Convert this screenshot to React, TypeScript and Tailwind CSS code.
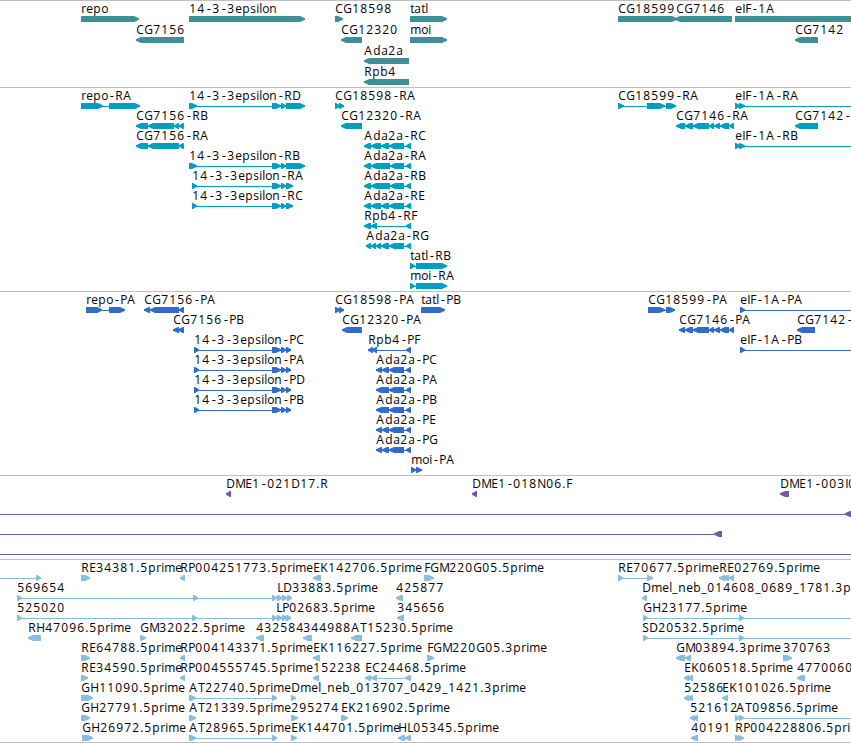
type Feature = {
  label?: string;
  at: number; // label origin
  row: number;
  dir: 1 | -1;
  blocks: [number, number][];
  line?: [number, number];
};

type TrackData = {
  name: string;
  fill: string;
  stroke: string;
  height: string;
  pitch: number;
  features: Feature[];
};

const WIDTH = 851;
const OFF = 860; // past the right edge

const ADVANCE: Record<string, number> = {
  "-": 7, ".": 4, _: 6,
  A: 9, B: 7, C: 8, D: 9, E: 7, F: 6, G: 9, H: 9, I: 3, K: 8, L: 6, M: 10,
  N: 9, P: 7, R: 8, S: 7, T: 7,
  a: 7, b: 8, d: 8, e: 7, i: 3, l: 3, m: 11, n: 8, o: 7, p: 8, r: 5, s: 6, t: 4,
};

// "81-103 109-140" -> [[81, 103], [109, 140]]
function parse(spec: string): [number, number][] {
  if (!spec) return [];
  return spec.split(" ").map((s) => {
    const [a, b] = s.split("-").map(Number);
    return [a, b];
  });
}

function f(
  row: number,
  label: string,
  dir: 1 | -1,
  spec: string,
  opts: { at?: number; line?: [number, number] } = {}
): Feature {
  const blocks = parse(spec);
  const at = opts.at ?? blocks[0]?.[0] ?? 0;
  const line: [number, number] | undefined =
    opts.line ??
    (blocks.length > 1 ? [blocks[0][0], blocks[blocks.length - 1][1]] : undefined);
  return { label, at, row, dir, blocks, line };
}

const GENES: Feature[] = [
  f(0, "repo", 1, "81-139"),
  f(0, "14-3-3epsilon", 1, "189-305"),
  f(0, "CG18598", 1, "335-343"),
  f(0, "tatl", 1, "410-447"),
  f(0, "CG18599", 1, "618-677"),
  f(0, "CG7146", -1, "675-732", { at: 676 }),
  f(0, "eIF-1A", 1, "735-860"),
  f(1, "CG7156", -1, "136-184"),
  f(1, "CG12320", -1, "341-362"),
  f(1, "moi", 1, "410-447"),
  f(1, "CG7142", -1, "795-818"),
  f(2, "Ada2a", -1, "364-409"),
  f(3, "Rpb4", -1, "364-409"),
];

const ADA_LONG = "364-371 371-381 381-389 389-404 406-411";
const ADA_SHORT = "364-371 371-390 390-404 406-411";

const TRANSCRIPTS: Feature[] = [
  f(0, "repo-RA", 1, "81-103 109-140"),
  f(0, "14-3-3epsilon-RD", 1, "189-197 272-281 281-286 286-305"),
  f(0, "CG18598-RA", 1, "335-340 339-344"),
  f(0, "CG18599-RA", 1, "618-624 647-665 666-676"),
  f(0, "eIF-1A-RA", 1, "735-740 739-745", { line: [735, OFF] }),
  f(1, "CG7156-RB", -1, "136-148 148-174 174-179 179-184"),
  f(1, "CG12320-RA", -1, "341-362"),
  f(1, "CG7146-RA", -1, "676-685 685-693 693-709 709-714 714-720 720-729 729-734"),
  f(1, "CG7142-RA", -1, "795-818"),
  f(2, "CG7156-RA", -1, "136-148 148-179 179-184"),
  f(2, "Ada2a-RC", -1, ADA_LONG),
  f(2, "eIF-1A-RB", 1, "735-740 739-745", { line: [735, OFF] }),
  f(3, "14-3-3epsilon-RB", 1, "189-197 272-281 281-286 286-305"),
  f(3, "Ada2a-RA", -1, ADA_SHORT),
  f(4, "14-3-3epsilon-RA", 1, "192-197 272-281 281-286 286-293"),
  f(4, "Ada2a-RB", -1, ADA_SHORT),
  f(5, "14-3-3epsilon-RC", 1, "192-197 272-281 281-286 286-293"),
  f(5, "Ada2a-RE", -1, ADA_LONG),
  f(6, "Rpb4-RF", -1, "364-371 371-377 406-411"),
  f(7, "Ada2a-RG", -1, "366-371 371-376 376-381 381-389 389-404 406-411"),
  f(8, "tatl-RB", 1, "410-415 416-447"),
  f(9, "moi-RA", 1, "410-415 416-447"),
];

const EPSILON_CDS = "194-199 272-281 281-286 286-291";
const ADA_CDS_LONG = "376-382 382-389 389-404 406-411";
const ADA_CDS_SHORT = "376-389 389-404 406-411";

const PROTEINS: Feature[] = [
  f(0, "repo-PA", 1, "86-102 109-125"),
  f(0, "CG7156-PA", -1, "144-150 150-179 179-184"),
  f(0, "CG18598-PA", 1, "335-340 339-344"),
  f(0, "tatl-PB", 1, "421-445"),
  f(0, "CG18599-PA", 1, "648-665 666-675"),
  f(0, "eIF-1A-PA", 1, "740-745", { line: [740, OFF] }),
  f(1, "CG7156-PB", -1, "173-179 178-184"),
  f(1, "CG12320-PA", -1, "342-362"),
  f(1, "CG7146-PA", -1, "679-685 685-693 693-709 709-714 714-720 720-729 729-734"),
  f(1, "CG7142-PA", -1, "797-815"),
  f(2, "14-3-3epsilon-PC", 1, EPSILON_CDS),
  f(2, "Rpb4-PF", -1, "368-373 372-377 406-411"),
  f(2, "eIF-1A-PB", 1, "740-745", { line: [740, OFF] }),
  f(3, "14-3-3epsilon-PA", 1, EPSILON_CDS),
  f(3, "Ada2a-PC", -1, ADA_CDS_LONG),
  f(4, "14-3-3epsilon-PD", 1, EPSILON_CDS),
  f(4, "Ada2a-PA", -1, ADA_CDS_SHORT),
  f(5, "14-3-3epsilon-PB", 1, EPSILON_CDS),
  f(5, "Ada2a-PB", -1, ADA_CDS_SHORT),
  f(6, "Ada2a-PE", -1, ADA_CDS_LONG),
  f(7, "Ada2a-PG", -1, ADA_CDS_LONG),
  f(8, "moi-PA", 1, "411-416 416-422"),
];

const BAC_ENDS: Feature[] = [
  f(0, "DME1-021D17.R", -1, "226-231"),
  f(0, "DME1-018N06.F", -1, "472-477"),
  f(0, "DME1-003I0", -1, "780-789"),
  f(1, "", -1, "845-851", { line: [0, OFF] }),
  f(2, "", -1, "714-722", { line: [0, 722] }),
  f(3, "", -1, "", { line: [0, OFF] }),
];

const ESTS: Feature[] = [
  f(0, "", 1, "36-41", { line: [0, 41] }),
  f(0, "RE34381.5prime", 1, "81-90"),
  f(0, "RP004251773.5prime", -1, "180-185"),
  f(0, "EK142706.5prime", -1, "313-321"),
  f(0, "FGM220G05.5prime", 1, "424-434"),
  f(0, "RE70677.5prime", 1, "618-623 647-653"),
  f(0, "RE02769.5prime", -1, "719-725 722-729 729-734"),
  f(1, "569654", 1, "17-22 193-198 272-277 277-282 282-287 287-292"),
  f(1, "LD33883.5prime", 1, "277-282 282-287 287-292"),
  f(1, "425877", -1, "396-403"),
  f(1, "Dmel_neb_014608_0689_1781.3prime", -1, "642-647"),
  f(2, "525020", 1, "17-22 192-197 272-277 277-282 282-287 286-291"),
  f(2, "LP02683.5prime", 1, "277-282 282-287 286-291", { at: 276 }),
  f(2, "345656", -1, "397-404"),
  f(2, "GH23177.5prime", 1, "643-648 739-744", { line: [643, OFF] }),
  f(3, "RH47096.5prime", -1, "28-41"),
  f(3, "GM32022.5prime", 1, "140-146"),
  f(3, "432584", -1, "256-264"),
  f(3, "344988", -1, "303-312"),
  f(3, "AT15230.5prime", -1, "351-362"),
  f(3, "SD20532.5prime", 1, "643-648 739-744", { at: 642, line: [643, OFF] }),
  f(4, "RE64788.5prime", 1, "81-90"),
  f(4, "RP004143371.5prime", -1, "180-185"),
  f(4, "EK116227.5prime", -1, "313-320"),
  f(4, "FGM220G05.3prime", 1, "427-434"),
  f(4, "GM03894.3prime", -1, "676-685 685-691"),
  f(4, "370763", 1, "783-792"),
  f(5, "RE34590.5prime", 1, "81-88"),
  f(5, "RP004555745.5prime", -1, "180-185"),
  f(5, "152238", -1, "313-319"),
  f(5, "EC24468.5prime", -1, "365-371 371-377 405-411"),
  f(5, "EK060518.5prime", -1, "684-689 687-693"),
  f(5, "4770060", -1, "797-805"),
  f(6, "GH11090.5prime", 1, "81-93"),
  f(6, "AT22740.5prime", 1, "189-196 272-277"),
  f(6, "Dmel_neb_013707_0429_1421.3prime", 1, "291-296"),
  f(6, "52586", -1, "684-689 687-693"),
  f(6, "EK101026.5prime", -1, "722-728"),
  f(7, "GH27791.5prime", 1, "81-90"),
  f(7, "AT21339.5prime", 1, "189-196"),
  f(7, "295274", 1, "291-298"),
  f(7, "EK216902.5prime", 1, "341-348"),
  f(7, "521612", -1, "690-695 693-698"),
  f(7, "AT09856.5prime", 1, "735-740 739-744", { at: 736, line: [735, OFF] }),
  f(8, "GH26972.5prime", 1, "82-93"),
  f(8, "AT28965.5prime", 1, "189-196 272-277"),
  f(8, "EK144701.5prime", 1, "291-297"),
  f(8, "HL05345.5prime", -1, "398-405 405-411"),
  f(8, "40191", -1, "691-698"),
  f(8, "RP004228806.5prime", 1, "735-740 738-744"),
];

const TRACKS: TrackData[] = [
  { name: "genes", fill: "fill-[#3f8f94]", stroke: "stroke-[#3f8f94]", height: "h-[87px]", pitch: 21, features: GENES },
  { name: "transcripts", fill: "fill-[#009fc0]", stroke: "stroke-[#009fc0]", height: "h-[204px]", pitch: 20, features: TRANSCRIPTS },
  { name: "proteins", fill: "fill-[#316ccc]", stroke: "stroke-[#316ccc]", height: "h-[184px]", pitch: 20, features: PROTEINS },
  { name: "bac-ends", fill: "fill-[#7757a8]", stroke: "stroke-[#7757a8]", height: "h-[84px]", pitch: 20, features: BAC_ENDS },
  { name: "ests", fill: "fill-[#89bddd]", stroke: "stroke-[#89bddd]", height: "h-[183px]", pitch: 20, features: ESTS },
];

// Blunt-nosed arrow: the tip is about a pixel high so short exons stay solid.
function blockPath([a, b]: [number, number], dir: 1 | -1, top: number) {
  const head = Math.min(5, b - a - 1);
  const upper = top + 2.2;
  const lower = top + 3.8;
  const bottom = top + 6;
  return dir === 1
    ? `M${a} ${top}H${b - head}L${b} ${upper}V${lower}L${b - head} ${bottom}H${a}Z`
    : `M${b} ${top}H${a + head}L${a} ${upper}V${lower}L${a + head} ${bottom}H${b}Z`;
}

function Label({ text, start, baseline }: { text: string; start: number; baseline: number }) {
  let x = start;
  const parts = text.split(/(-)/).filter(Boolean).map((part) => {
    const xs = Array.from(part).map((ch) => {
      const here = x;
      x += ADVANCE[ch] ?? 8;
      return here;
    });
    return { part, xs };
  });

  return (
    <text y={baseline} className="fill-black">
      {parts.map(({ part, xs }, i) => (
        // The mono face has the long hyphen that these names are set with.
        <tspan
          key={i}
          x={xs.join(" ")}
          className={part === "-" ? "font-['DejaVu_Sans_Mono',monospace]" : undefined}
        >
          {part}
        </tspan>
      ))}
    </text>
  );
}

function Track({ track }: { track: TrackData }) {
  return (
    <section className={`w-full overflow-hidden border-t border-[#c0c0c0] ${track.height}`}>
      <svg
        width={WIDTH}
        height="100%"
        className={`block font-['Open_Sans','Noto_Sans',sans-serif] text-[12px] ${track.fill}`}
      >
        {track.features.map((feature, i) => {
          // The section's border takes the first pixel.
          const top = 15 + feature.row * track.pitch;
          return (
            <g key={i}>
              {feature.line && (
                <path
                  d={`M${feature.line[0]} ${top + 3.5}H${feature.line[1]}`}
                  className={track.stroke}
                  shapeRendering="crispEdges"
                />
              )}
              {feature.blocks.map((b, j) => (
                <path key={j} d={blockPath(b, feature.dir, top)} />
              ))}
              {feature.label && (
                <Label text={feature.label} start={feature.at + 0.3} baseline={top - 3} />
              )}
            </g>
          );
        })}
      </svg>
    </section>
  );
}

export default function App() {
  return (
    <main className="flex w-[851px] flex-col overflow-hidden border-b border-[#c0c0c0] bg-white">
      {TRACKS.map((track) => (
        <Track key={track.name} track={track} />
      ))}
    </main>
  );
}
